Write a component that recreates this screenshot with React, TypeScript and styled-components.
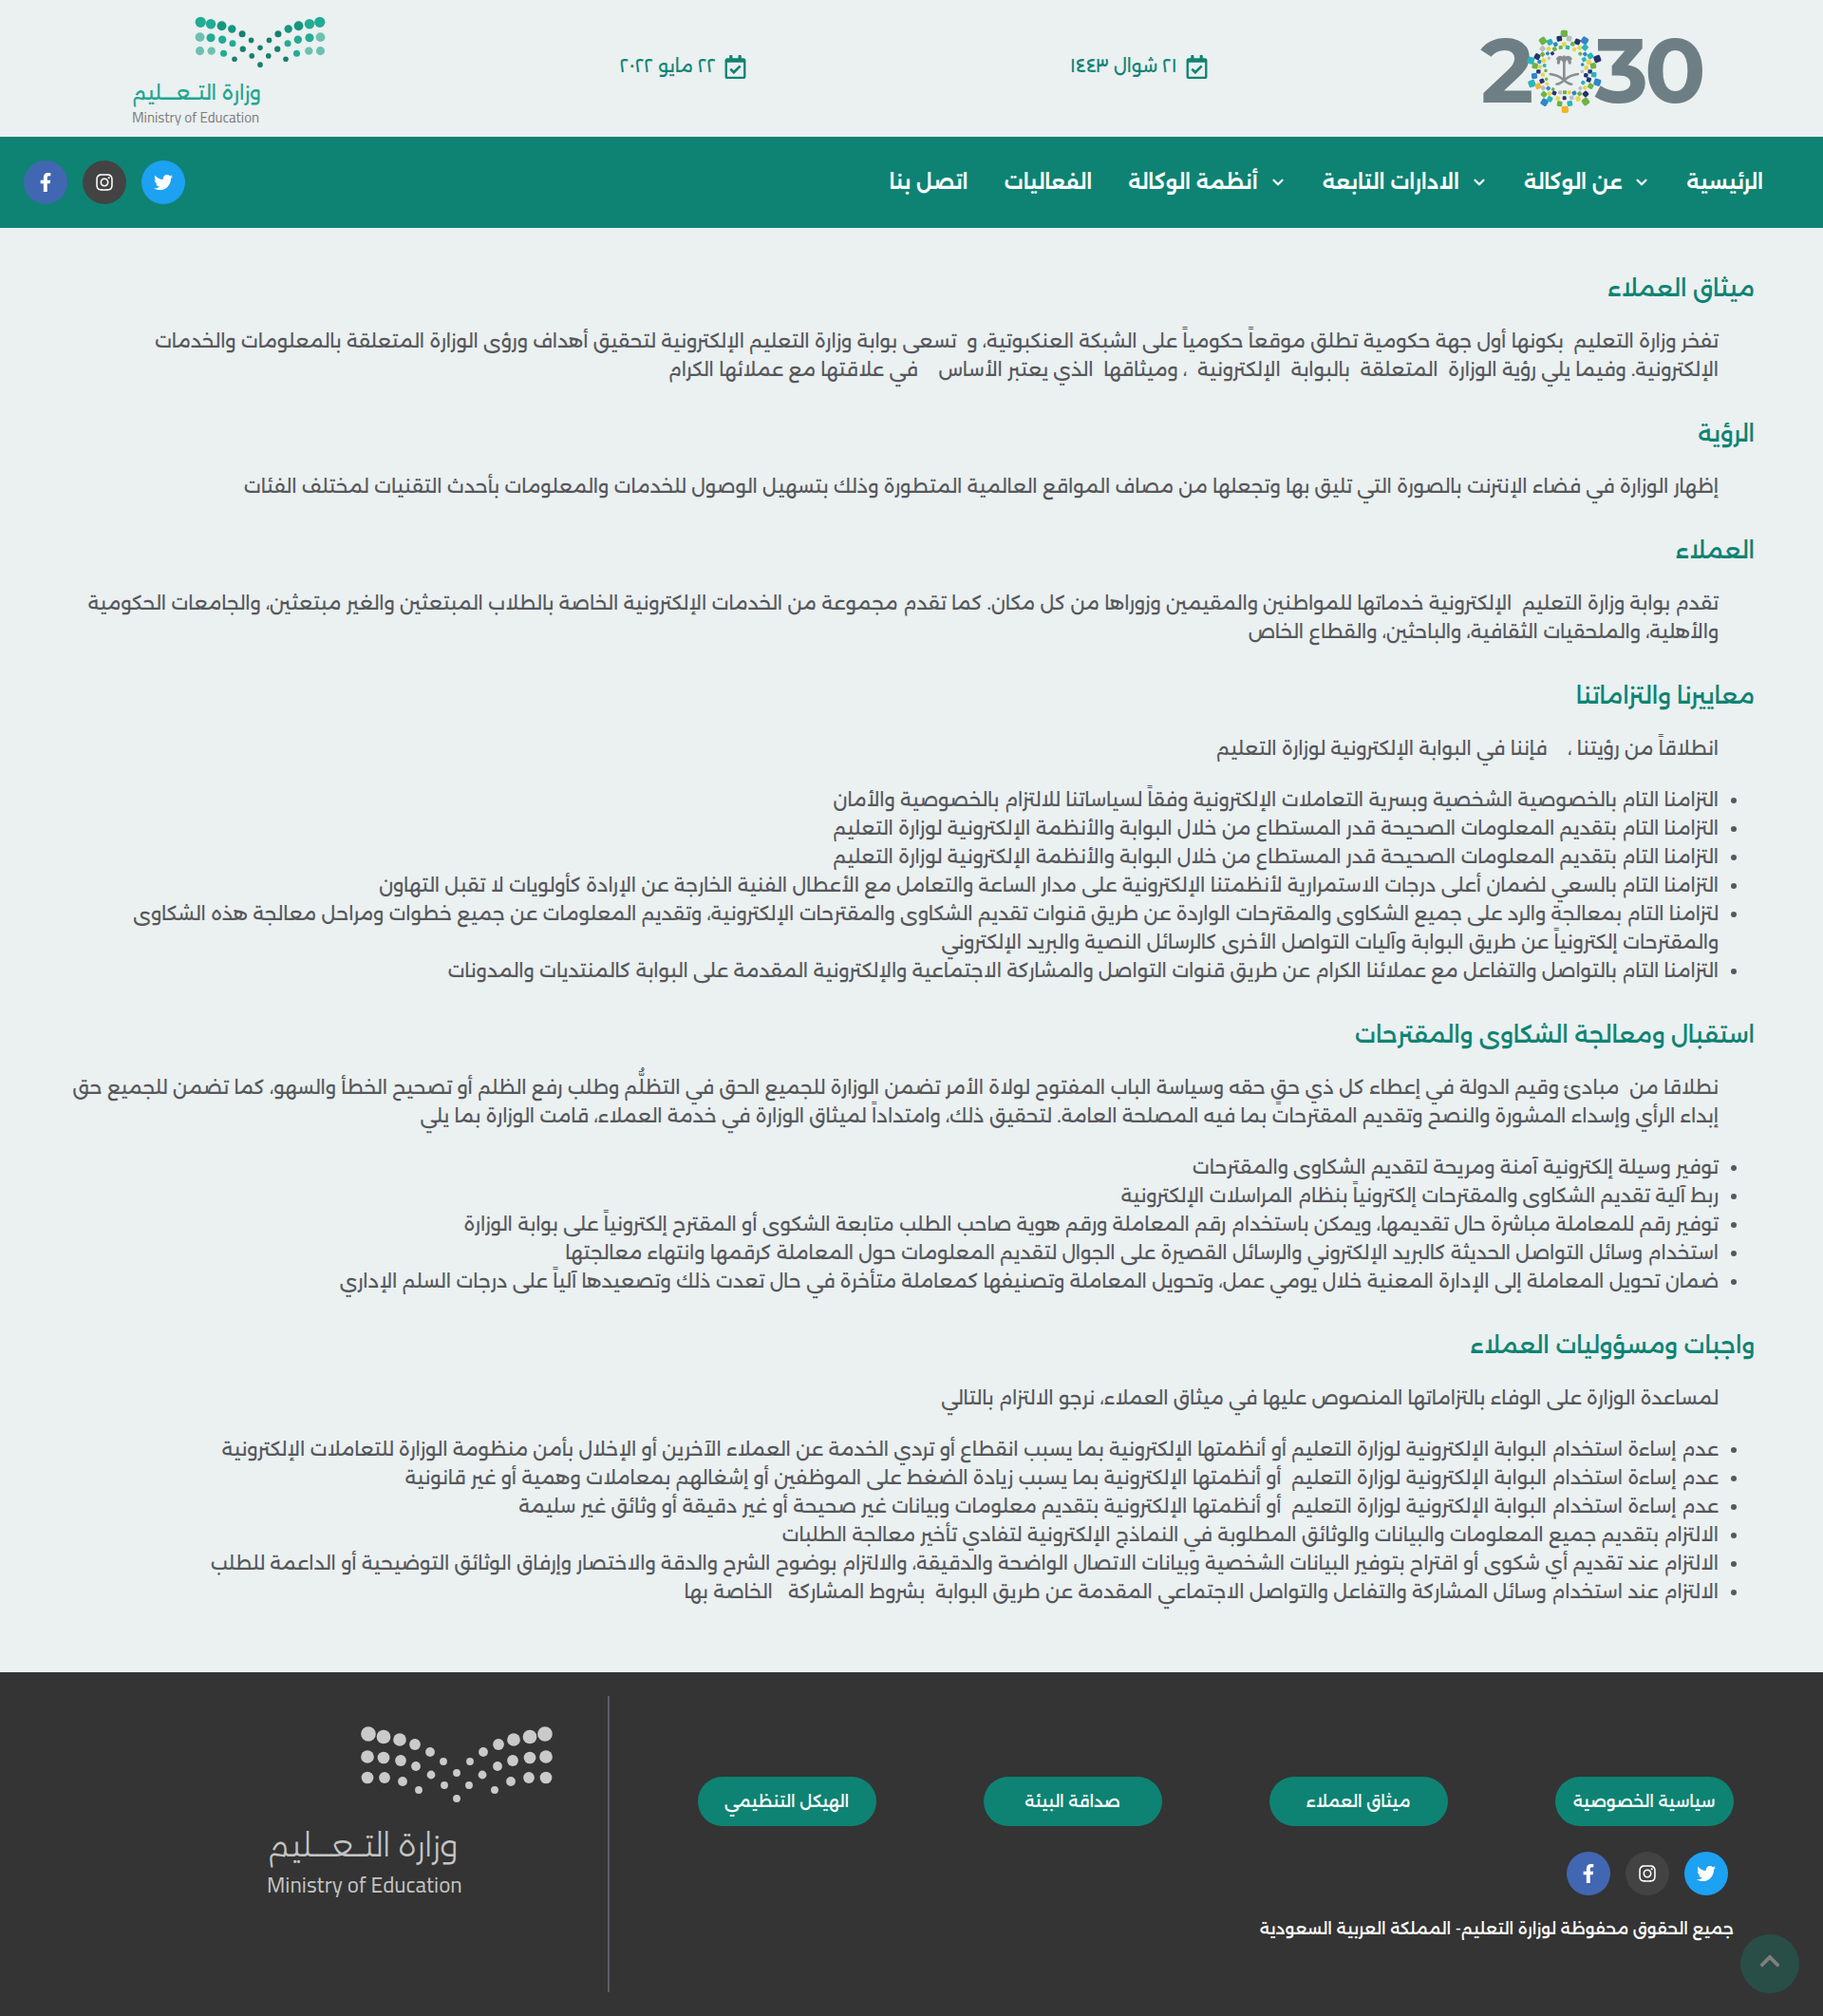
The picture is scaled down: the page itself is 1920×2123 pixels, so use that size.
import React from "react";
import styled, { createGlobalStyle } from "styled-components";
import {
  FaTwitter,
  FaInstagram,
  FaFacebookF,
  FaRegCalendarCheck,
  FaChevronUp,
} from "react-icons/fa";
import { FiChevronDown } from "react-icons/fi";

const GREEN = "#0e8373";
const FONT = `"Alexandria", "Noto Sans", "DejaVu Sans", sans-serif`;

const GlobalStyle = createGlobalStyle`
  *, *::before, *::after { box-sizing: border-box; }
  body {
    margin: 0;
    direction: rtl;
    background: #ebf0f1;
    color: #56585c;
    font-family: ${FONT};
    font-size: 20px;
    line-height: 30px;
  }
  a { color: inherit; text-decoration: none; }
`;

/* ---------- logos ---------- */

const LogoSvg = styled.svg`
  display: block;
  flex: none;
  overflow: visible;
`;

const ARM = [
  [
    [93, 8, 8],
    [77, 11, 7.5],
    [60, 14, 7],
    [44, 19, 6],
    [28, 27, 5],
    [14, 37, 4],
    [0, 49, 4],
  ],
  [
    [94, 32, 7],
    [77, 33, 6.5],
    [59, 36, 6],
    [43, 42, 5],
    [27, 51, 4.5],
    [13, 62, 4],
    [0, 76, 4],
  ],
  [
    [94, 54, 6.5],
    [76, 54, 6],
    [57, 58, 5],
    [40, 67, 4],
  ],
];

function dotTone(row: number, index: number) {
  if (row === 1 && index === 0) return "#6bc1b0";
  if (row === 2 && index < 2) return "#6bc1b0";
  if (index >= 4 || (row === 2 && index === 3)) return "#15806f";
  if (row === 0 && (index === 2 || index === 3)) return "#16967f";
  return "#22ab95";
}

type MinistryLogoProps = { compact?: boolean };

function MinistryLogo({ compact }: MinistryLogoProps) {
  const sx = compact ? 0.675 : 1;
  const sy = compact ? 0.66 : 1;
  const mid = 200 * sx;
  const textEnd = 201 * sx;
  return (
    <LogoSvg
      width={compact ? 202 : 300}
      height={compact ? 116 : 182}
      role="img"
      aria-label="وزارة التعليم"
    >
      {ARM.map((row, r) =>
        row.map(([dx, y, radius], i) =>
          (dx === 0 ? [0] : [-1, 1]).map((side) => (
            <circle
              key={`${r}-${i}-${side}`}
              cx={mid + side * dx * sx}
              cy={y * sy + (compact ? 4 : 0)}
              r={radius * (compact ? 0.7 : 0.98)}
              fill={compact ? dotTone(r, i) : "#cacaca"}
            />
          ))
        )
      )}
      <text
        x={textEnd}
        y={compact ? 91 : 137}
        direction="rtl"
        textAnchor="start"
        fontFamily={FONT}
        fontWeight={compact ? 400 : 300}
        fontSize={compact ? 21 : 33}
        fill={compact ? "#22a590" : "#c4c4c4"}
      >
        وزارة التــعــــليم
      </text>
      <text
        x={0}
        y={compact ? 115 : 175}
        direction="ltr"
        fontFamily={`"Cairo", "Open Sans", sans-serif`}
        fontSize={compact ? 15 : 23}
        fill={compact ? "#7d7d7d" : "#c4c4c4"}
      >
        Ministry of Education
      </text>
    </LogoSvg>
  );
}

const G = "#6fb244";
const B = "#2f86c8";
const N = "#25336d";
const T = "#27b5bd";
const Y = "#e3d94a";
const S = "#b9bec1";

const MOSAIC: [number, number, number, string][] = [
  [292, 40, 18, G], [357, 62, 18, B], [397, 120, 18, N], [397, 194, 18, B],
  [360, 255, 18, G], [295, 280, 18, "#f0b429"], [230, 257, 18, B], [190, 198, 18, T],
  [187, 125, 18, T], [225, 63, 18, G],
  [277, 56, 14, N], [308, 56, 14, S], [247, 67, 15, T], [334, 66, 15, N],
  [292, 74, 12, Y], [265, 74, 11, B], [319, 73, 11, G],
  [224, 88, 13, S], [243, 88, 11, Y], [262, 89, 11, G], [281, 84, 10, G],
  [303, 84, 11, T], [324, 90, 10, Y], [341, 85, 11, Y], [358, 84, 15, T],
  [207, 113, 15, N], [224, 106, 11, G], [240, 103, 9, B], [255, 103, 9, N],
  [375, 111, 15, T], [358, 105, 10, B], [343, 104, 9, G],
  [228, 125, 12, Y], [244, 118, 8, S], [214, 129, 10, B], [200, 142, 15, G],
  [355, 122, 11, T], [370, 130, 13, Y], [384, 142, 15, G], [362, 148, 11, Y],
  [216, 145, 10, Y], [230, 141, 9, T], [211, 160, 11, N], [225, 170, 10, Y],
  [234, 157, 8, G], [198, 174, 15, B], [350, 138, 8, B], [374, 160, 11, N],
  [361, 172, 11, N], [386, 170, 14, T], [349, 160, 8, S], [370, 186, 12, N],
  [352, 195, 10, T], [376, 206, 14, G], [210, 206, 15, "#e8b83a"], [222, 190, 12, N],
  [236, 184, 8, G], [226, 212, 11, S], [238, 199, 9, Y], [242, 213, 10, B],
  [257, 216, 8, G], [343, 213, 9, S], [358, 211, 10, Y], [228, 232, 14, G],
  [245, 230, 11, Y], [261, 228, 11, N], [247, 247, 14, T], [279, 226, 10, S],
  [294, 226, 10, G], [308, 226, 10, Y], [324, 228, 11, B], [341, 230, 11, G],
  [360, 231, 14, N], [272, 245, 11, Y], [293, 244, 10, N], [316, 243, 11, S],
  [336, 246, 13, Y], [278, 262, 14, G], [310, 261, 14, T],
];

const TILE_SCALE = 1.2;

function VisionLogo() {
  return (
    <LogoSvg width={260} height={108} viewBox="0 -12 780 324" role="img" aria-label="2030">
      <g
        fontFamily={`"Montserrat", "Inter", sans-serif`}
        fontWeight={700}
        fontSize={286}
        fill="#6d7f85"
        textAnchor="middle"
        direction="ltr"
      >
        <text x={112} y={259}>2</text>
        <text x={474} y={259}>3</text>
        <text x={643} y={259}>0</text>
      </g>
      {MOSAIC.map(([x, y, tile, fill]) => {
        const size = tile * TILE_SCALE;
        return (
          <rect
            key={`${x}-${y}`}
            x={x - size / 2}
            y={y - size / 2}
            width={size}
            height={size}
            rx={size / 4}
            fill={fill}
            transform={`rotate(${(Math.atan2(y - 160, x - 292) * 180) / Math.PI} ${x} ${y})`}
          />
        );
      })}
      <g fill="none" stroke="#8a8d8f" strokeLinecap="round">
        <path d="M292 130V180" strokeWidth="8" />
        <path
          d="M292 128c-8-14-16-12-18 4M292 128c8-14 16-12 18 4M292 126c-6-12-14-14-20-6M292 126c6-12 14-14 20-6M292 126v-12"
          strokeWidth="10"
        />
        <path d="M248 168c18 2 30 8 42 18c8 7 18 14 26 14" strokeWidth="7" />
        <path d="M336 168c-18 2-30 8-42 18c-8 7-18 14-26 14" strokeWidth="7" />
      </g>
    </LogoSvg>
  );
}

/* ---------- header ---------- */

const Header = styled.header`
  display: grid;
  grid-template-columns: repeat(4, 1fr);
  align-items: center;
  justify-items: center;
  height: 144px;
`;

const DateLabel = styled.p`
  display: flex;
  align-items: center;
  gap: 8px;
  margin: 0;
  padding-bottom: 4px;
  color: ${GREEN};
  font-size: 19px;
`;

const NavBar = styled.div`
  display: flex;
  align-items: center;
  justify-content: space-between;
  min-height: 96px;
  padding: 0 44px 0 19px;
  background: ${GREEN};
  color: #fff;
`;

const NavList = styled.ul`
  display: flex;
  margin: 0;
  padding: 0;
  list-style: none;
`;

const NavLink = styled.a`
  display: flex;
  align-items: center;
  gap: 12px;
  padding: 0 19px;
  font-size: 21px;
  font-weight: 600;
`;

const SocialRow = styled.div`
  display: flex;
  gap: 16px;
  margin: 0 6px;
`;

const SocialLink = styled.a<{ $color: string }>`
  display: flex;
  align-items: center;
  justify-content: center;
  width: 46px;
  height: 46px;
  border-radius: 50%;
  background: ${(p) => p.$color};
  color: #fff;
  font-size: 20px;
`;

function Socials() {
  return (
    <SocialRow>
      <SocialLink href="#twitter" aria-label="Twitter" $color="#1da1f2">
        <FaTwitter />
      </SocialLink>
      <SocialLink href="#instagram" aria-label="Instagram" $color="#434343">
        <FaInstagram />
      </SocialLink>
      <SocialLink href="#facebook" aria-label="Facebook" $color="#4267b2">
        <FaFacebookF />
      </SocialLink>
    </SocialRow>
  );
}

/* ---------- content ---------- */

const Main = styled.main`
  display: flex;
  flex-direction: column;
  gap: 37px;
  padding: 48px 72px 70px;
`;

const Title = styled.h2`
  margin: 0 0 24px;
  color: ${GREEN};
  font-size: 24px;
  font-weight: 500;
  line-height: 32px;
`;

const Paragraph = styled.p`
  margin: 0;
  padding-inline-start: 38px;
`;

const BulletList = styled.ul`
  margin: 24px 0 0;
  padding: 0;
  padding-inline-start: 38px;
`;

type SectionData = { title: string; text: string; items?: string[] };

const SECTIONS: SectionData[] = [
  {
    title: "ميثاق العملاء",
    text: "تفخر وزارة التعليم\u00a0 بكونها أول جهة حكومية تطلق موقعاً حكومياً على الشبكة العنكبوتية، و\u00a0 تسعى بوابة وزارة التعليم الإلكترونية لتحقيق أهداف ورؤى الوزارة المتعلقة بالمعلومات والخدمات الإلكترونية. وفيما يلي رؤية الوزارة\u00a0 المتعلقة\u00a0 بالبوابة\u00a0 الإلكترونية\u00a0 ، وميثاقها\u00a0 الذي يعتبر الأساس\u00a0\u00a0\u00a0 في علاقتها مع عملائها الكرام",
  },
  {
    title: "الرؤية",
    text: "إظهار الوزارة في فضاء الإنترنت بالصورة التي تليق بها وتجعلها من مصاف المواقع العالمية المتطورة وذلك بتسهيل الوصول للخدمات والمعلومات بأحدث التقنيات لمختلف الفئات",
  },
  {
    title: "العملاء",
    text: "تقدم بوابة وزارة التعليم\u00a0 الإلكترونية خدماتها للمواطنين والمقيمين وزوراها من كل مكان. كما تقدم مجموعة من الخدمات الإلكترونية الخاصة بالطلاب المبتعثين والغير مبتعثين، والجامعات الحكومية والأهلية، والملحقيات الثقافية، والباحثين، والقطاع الخاص",
  },
  {
    title: "معاييرنا والتزاماتنا",
    text: "انطلاقاً من رؤيتنا ،\u00a0\u00a0\u00a0 فإننا في البوابة الإلكترونية لوزارة التعليم",
    items: [
      "التزامنا التام بالخصوصية الشخصية وبسرية التعاملات الإلكترونية وفقاً لسياساتنا للالتزام بالخصوصية والأمان",
      "التزامنا التام بتقديم المعلومات الصحيحة قدر المستطاع من خلال البوابة والأنظمة الإلكترونية لوزارة التعليم",
      "التزامنا التام بتقديم المعلومات الصحيحة قدر المستطاع من خلال البوابة والأنظمة الإلكترونية لوزارة التعليم",
      "التزامنا التام بالسعي لضمان أعلى درجات الاستمرارية لأنظمتنا الإلكترونية على مدار الساعة والتعامل مع الأعطال الفنية الخارجة عن الإرادة كأولويات لا تقبل التهاون",
      "لتزامنا التام بمعالجة والرد على جميع الشكاوى والمقترحات الواردة عن طريق قنوات تقديم الشكاوى والمقترحات الإلكترونية، وتقديم المعلومات عن جميع خطوات ومراحل معالجة هذه الشكاوى والمقترحات إلكترونياً عن طريق البوابة وآليات التواصل الأخرى كالرسائل النصية والبريد الإلكتروني",
      "التزامنا التام بالتواصل والتفاعل مع عملائنا الكرام عن طريق قنوات التواصل والمشاركة الاجتماعية والإلكترونية المقدمة على البوابة كالمنتديات والمدونات",
    ],
  },
  {
    title: "استقبال ومعالجة الشكاوى والمقترحات",
    text: "نطلاقا من\u00a0 مبادئ وقيم الدولة في إعطاء كل ذي حقٍ حقه وسياسة الباب المفتوح لولاة الأمر تضمن الوزارة للجميع الحق في التظلُّم وطلب رفع الظلم أو تصحيح الخطأ والسهو، كما تضمن للجميع حق إبداء الرأي وإسداء المشورة والنصح وتقديم المقترحات بما فيه المصلحة العامة. لتحقيق ذلك، وامتداداً لميثاق الوزارة في خدمة العملاء، قامت الوزارة بما يلي",
    items: [
      "توفير وسيلة إلكترونية آمنة ومريحة لتقديم الشكاوى والمقترحات",
      "ربط آلية تقديم الشكاوى والمقترحات إلكترونياً بنظام المراسلات الإلكترونية",
      "توفير رقم للمعاملة مباشرة حال تقديمها، ويمكن باستخدام رقم المعاملة ورقم هوية صاحب الطلب متابعة الشكوى أو المقترح إلكترونياً على بوابة الوزارة",
      "استخدام وسائل التواصل الحديثة كالبريد الإلكتروني والرسائل القصيرة على الجوال لتقديم المعلومات حول المعاملة كرقمها وانتهاء معالجتها",
      "ضمان تحويل المعاملة إلى الإدارة المعنية خلال يومي عمل، وتحويل المعاملة وتصنيفها كمعاملة متأخرة في حال تعدت ذلك وتصعيدها آلياً على درجات السلم الإداري",
    ],
  },
  {
    title: "واجبات ومسؤوليات العملاء",
    text: "لمساعدة الوزارة على الوفاء بالتزاماتها المنصوص عليها في ميثاق العملاء، نرجو الالتزام بالتالي",
    items: [
      "عدم إساءة استخدام البوابة الإلكترونية لوزارة التعليم أو أنظمتها الإلكترونية بما يسبب انقطاع أو تردي الخدمة عن العملاء الآخرين أو الإخلال بأمن منظومة الوزارة للتعاملات الإلكترونية",
      "عدم إساءة استخدام البوابة الإلكترونية لوزارة التعليم\u00a0 أو أنظمتها الإلكترونية بما يسبب زيادة الضغط على الموظفين أو إشغالهم بمعاملات وهمية أو غير قانونية",
      "عدم إساءة استخدام البوابة الإلكترونية لوزارة التعليم\u00a0 أو أنظمتها الإلكترونية بتقديم معلومات وبيانات غير صحيحة أو غير دقيقة أو وثائق غير سليمة",
      "الالتزام بتقديم جميع المعلومات والبيانات والوثائق المطلوبة في النماذج الإلكترونية لتفادي تأخير معالجة الطلبات",
      "الالتزام عند تقديم أي شكوى أو اقتراح بتوفير البيانات الشخصية وبيانات الاتصال الواضحة والدقيقة، والالتزام بوضوح الشرح والدقة والاختصار وإرفاق الوثائق التوضيحية أو الداعمة للطلب",
      "الالتزام عند استخدام وسائل المشاركة والتفاعل والتواصل الاجتماعي المقدمة عن طريق البوابة\u00a0 بشروط المشاركة\u00a0\u00a0 الخاصة بها",
    ],
  },
];

/* ---------- footer ---------- */

const Footer = styled.footer`
  display: grid;
  grid-template-columns: 2fr 1fr;
  padding: 25px 0;
  background: #343434;
  color: #fff;
`;

const FooterInfo = styled.div`
  min-height: 312px;
  padding: 85px 38px 50px 36px;
  border-inline-end: 2px solid #5f5c66;
`;

const FooterLinks = styled.nav`
  display: grid;
  grid-template-columns: repeat(4, 1fr);
  justify-items: center;
`;

const PillLink = styled.a`
  display: flex;
  align-items: center;
  justify-content: center;
  width: 188px;
  height: 52px;
  border-radius: 26px;
  background: ${GREEN};
  font-size: 17px;
  font-weight: 500;
`;

const FooterNotes = styled.div`
  display: flex;
  flex-direction: column;
  gap: 20px;
  padding: 27px 56px 0;
`;

const Copyright = styled.p`
  margin: 0;
  font-size: 17px;
  font-weight: 500;
`;

const FooterBrand = styled.div`
  padding: 32px 59px;
`;

const BackToTop = styled.a`
  position: fixed;
  right: 25px;
  bottom: 24px;
  display: flex;
  align-items: center;
  justify-content: center;
  width: 62px;
  height: 62px;
  padding-bottom: 6px;
  border-radius: 50%;
  background: #294d47;
  color: #7e7e7e;
  font-size: 24px;
`;

const NAV = [
  { label: "الرئيسية" },
  { label: "عن الوكالة", menu: true },
  { label: "الادارات التابعة", menu: true },
  { label: "أنظمة الوكالة", menu: true },
  { label: "الفعاليات" },
  { label: "اتصل بنا" },
];

const FOOTER_LINKS = ["سياسية الخصوصية", "ميثاق العملاء", "صداقة البيئة", "الهيكل التنظيمي"];

export default function App() {
  return (
    <>
      <GlobalStyle />
      <Header>
        <VisionLogo />
        <DateLabel>
          <FaRegCalendarCheck size={25} />
          ٢١ شوال ١٤٤٣
        </DateLabel>
        <DateLabel>
          <FaRegCalendarCheck size={25} />
          ٢٢ مايو ٢٠٢٢
        </DateLabel>
        <MinistryLogo compact />
      </Header>
      <NavBar>
        <nav>
          <NavList>
            {NAV.map((item) => (
              <li key={item.label}>
                <NavLink href="#">
                  {item.menu && <FiChevronDown size={18} strokeWidth={3} />}
                  {item.label}
                </NavLink>
              </li>
            ))}
          </NavList>
        </nav>
        <Socials />
      </NavBar>
      <Main>
        {SECTIONS.map((section) => (
          <section key={section.title}>
            <Title>{section.title}</Title>
            <Paragraph>{section.text}</Paragraph>
            {section.items && (
              <BulletList>
                {section.items.map((item, i) => (
                  <li key={i}>{item}</li>
                ))}
              </BulletList>
            )}
          </section>
        ))}
      </Main>
      <Footer>
        <FooterInfo>
          <FooterLinks>
            {FOOTER_LINKS.map((label) => (
              <PillLink key={label} href="#">
                {label}
              </PillLink>
            ))}
          </FooterLinks>
          <FooterNotes>
            <Socials />
            <Copyright>جميع الحقوق محفوظة لوزارة التعليم- المملكة العربية السعودية</Copyright>
          </FooterNotes>
        </FooterInfo>
        <FooterBrand>
          <MinistryLogo />
        </FooterBrand>
      </Footer>
      <BackToTop href="#" aria-label="العودة إلى الأعلى">
        <FaChevronUp />
      </BackToTop>
    </>
  );
}
